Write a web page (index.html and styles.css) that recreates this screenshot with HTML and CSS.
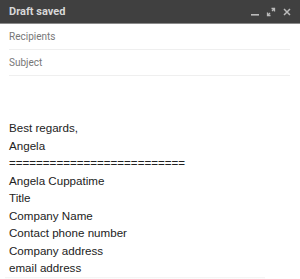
FILE: index.html
```html
<!DOCTYPE html>
<html lang="en">
<head>
  <meta charset="UTF-8" />
  <title>Draft saved</title>
  <link rel="stylesheet" href="styles.css">
</head>
<body>
  <div class="compose">
    <div class="header">
      <span class="title">Draft saved</span>
      <div class="actions">
        <svg width="10" height="10" viewBox="0 0 10 10"><rect x="1" y="7" width="8" height="1.6" fill="#bbb"/></svg>
        <svg width="10" height="10" viewBox="0 0 10 10"><path d="M5.5 1.5h3v3M8.5 1.5l-2.5 2.5M4.5 8.5h-3v-3M1.5 8.5l2.5-2.5" stroke="#bbb" stroke-width="1.3" fill="none"/></svg>
        <svg width="10" height="10" viewBox="0 0 10 10"><path d="M2 2l6 6M8 2l-6 6" stroke="#bbb" stroke-width="1.5"/></svg>
      </div>
    </div>
    <div class="field">Recipients</div>
    <div class="field">Subject</div>
    <div class="body">
      <div>Best regards,</div>
      <div>Angela</div>
      <div>==========================</div>
      <div>Angela Cuppatime</div>
      <div>Title</div>
      <div>Company Name</div>
      <div>Contact phone number</div>
      <div>Company address</div>
      <div>email address</div>
    </div>
    <div class="shadow"></div>
  </div>
</body>
</html>
```

FILE: styles.css
```css
body {
  margin: 0;
  font-family: "Liberation Sans", Arial, sans-serif;
  background: #fff;
  overflow: hidden;
}
.compose {
  width: 300px;
  height: 279px;
  overflow: hidden;
}
.header {
  height: 23px;
  background: #404040;
  border-bottom: 1px solid #8a8a8a;
  display: flex;
  align-items: center;
  justify-content: space-between;
  padding: 0 8px 0 9px;
}
.title {
  font-family: Roboto, "Liberation Sans", sans-serif;
  font-size: 11px;
  font-weight: bold;
  color: #d8d8d8;
}
.actions {
  display: flex;
  gap: 6px;
  padding-top: 1px;
}
.field {
  margin: 0 10px 0 9px;
  height: 25px;
  line-height: 26px;
  font-family: Roboto, "Liberation Sans", sans-serif;
  font-size: 10px;
  color: #777;
  border-bottom: 1px solid #efefef;
}
.body {
  padding: 43px 9px 0;
  font-size: 11.6px;
  line-height: 17.5px;
  color: #222;
}
.shadow {
  margin: 0 35px 0 5px;
  height: 2px;
  background: linear-gradient(#f2f2f2, #fff);
}
```
